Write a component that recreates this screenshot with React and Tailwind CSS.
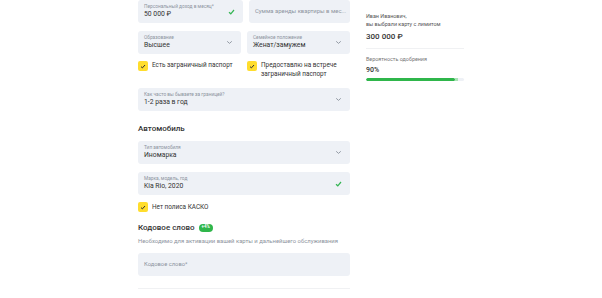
import React from "react";

const font = { fontFamily: "Roboto, 'Noto Sans', Arial, sans-serif" };

function Chevron() {
  return (
    <svg width="7" height="5" viewBox="0 0 7 5" className="shrink-0">
      <path d="M1.2 1.3 L3.5 3.4 L5.8 1.3" fill="none" stroke="#8a929c" strokeWidth="0.9" />
    </svg>
  );
}

function Check() {
  return (
    <svg width="7" height="6" viewBox="0 0 7 6" className="shrink-0">
      <path d="M1 3.2 L2.8 4.8 L6 1" fill="none" stroke="#34b553" strokeWidth="1.2" />
    </svg>
  );
}

function Field({ label, value, icon, className = "" }) {
  return (
    <div className={`h-[23px] rounded-[3px] bg-[#eef1f6] flex items-center pl-[6px] pr-[8px] ${className}`}>
      <div className="flex-1 min-w-0 flex flex-col justify-center">
        <div className="text-[4.8px] leading-[6px] text-[#8d949e] whitespace-nowrap">{label}</div>
        <div className="text-[6.8px] leading-[9px] text-[#333] whitespace-nowrap">{value}</div>
      </div>
      {icon === "chevron" && <Chevron />}
      {icon === "check" && <Check />}
    </div>
  );
}

function Box() {
  return (
    <div className="w-[10px] h-[10px] rounded-[2px] bg-[#ffdd2d] flex items-center justify-center shrink-0">
      <svg width="6" height="5" viewBox="0 0 6 5">
        <path d="M1 2.6 L2.4 3.9 L5 1" fill="none" stroke="#333" strokeWidth="1" />
      </svg>
    </div>
  );
}

export default function App() {
  return (
    <div className="w-[602px] h-[298px] bg-white overflow-hidden flex pl-[138px]" style={font}>
      <div className="w-[212px] flex flex-col">
        <div className="flex gap-[6px]">
          <Field className="flex-1" label="Персональный доход в месяц*" value="50 000 ₽" icon="check" />
          <div className="flex-1 min-w-0 h-[23px] rounded-[3px] bg-[#eef1f6] flex items-center pl-[6px] pr-[4px]">
            <div className="text-[5.9px] text-[#8d949e] whitespace-nowrap">Сумма аренды квартиры в мес...</div>
          </div>
        </div>
        <div className="flex gap-[6px] mt-[8px]">
          <Field className="flex-1" label="Образование" value="Высшее" icon="chevron" />
          <Field className="flex-1" label="Семейное положение" value="Женат/замужем" icon="chevron" />
        </div>
        <div className="flex gap-[6px] mt-[7px]">
          <div className="flex-1 flex items-start gap-[4px]">
            <Box />
            <div className="text-[6.4px] leading-[9px] text-[#333]">Есть заграничный паспорт</div>
          </div>
          <div className="flex-1 flex items-start gap-[4px]">
            <Box />
            <div className="text-[6.4px] leading-[9px] text-[#333]">Предоставлю на встрече заграничный паспорт</div>
          </div>
        </div>
        <Field className="mt-[9px]" label="Как часто вы бываете за границей?" value="1-2 раза в год" icon="chevron" />
        <div className="mt-[12px] text-[8px] leading-[11px] font-medium text-[#333]">Автомобиль</div>
        <Field className="mt-[7px]" label="Тип автомобиля" value="Иномарка" icon="chevron" />
        <Field className="mt-[8px]" label="Марка, модель, год" value="Kia Rio, 2020" icon="check" />
        <div className="flex items-center gap-[4px] mt-[7px]">
          <Box />
          <div className="text-[6.4px] leading-[9px] text-[#333]">Нет полиса КАСКО</div>
        </div>
        <div className="flex items-center gap-[4px] mt-[10px]">
          <div className="text-[8px] leading-[11px] font-medium text-[#333]">Кодовое слово</div>
          <div className="h-[8px] px-[3px] rounded-full bg-[#2fb64b] text-white text-[4.5px] font-bold flex items-center">+4%</div>
        </div>
        <div className="mt-[4px] text-[5.9px] leading-[8px] text-[#8d949e] whitespace-nowrap">Необходимо для активации вашей карты и дальнейшего обслуживания</div>
        <div className="mt-[8px] h-[23px] rounded-[3px] bg-[#eef1f6] flex items-center pl-[6px]">
          <div className="text-[5.8px] text-[#8d949e]">Кодовое слово*</div>
        </div>
        <div className="mt-[12px] h-px bg-[#f0f1f3]" />
      </div>
      <div className="ml-[16px] w-[98px] flex flex-col pt-[12px]">
        <div className="text-[5.4px] leading-[8px] text-[#555]">Иван Иванович,</div>
        <div className="text-[5.4px] leading-[9px] text-[#555] whitespace-nowrap">вы выбрали карту с лимитом</div>
        <div className="mt-[2px] text-[8px] leading-[11px] font-medium text-[#333]">300 000 ₽</div>
        <div className="mt-[6px] h-px bg-[#f0f1f3]" />
        <div className="mt-[6px] text-[5.4px] leading-[8px] text-[#777]">Вероятность одобрения</div>
        <div className="mt-[3px] text-[7px] leading-[9px] font-medium text-[#333]">90%</div>
        <div className="mt-[3px] h-[3px] rounded-full bg-[#eef1f6] flex overflow-hidden">
          <div className="h-full w-[89px] bg-[#2fb64b] rounded-full" />
          <div className="h-full w-[3px] bg-[#a8e3b4]" />
        </div>
      </div>
    </div>
  );
}
